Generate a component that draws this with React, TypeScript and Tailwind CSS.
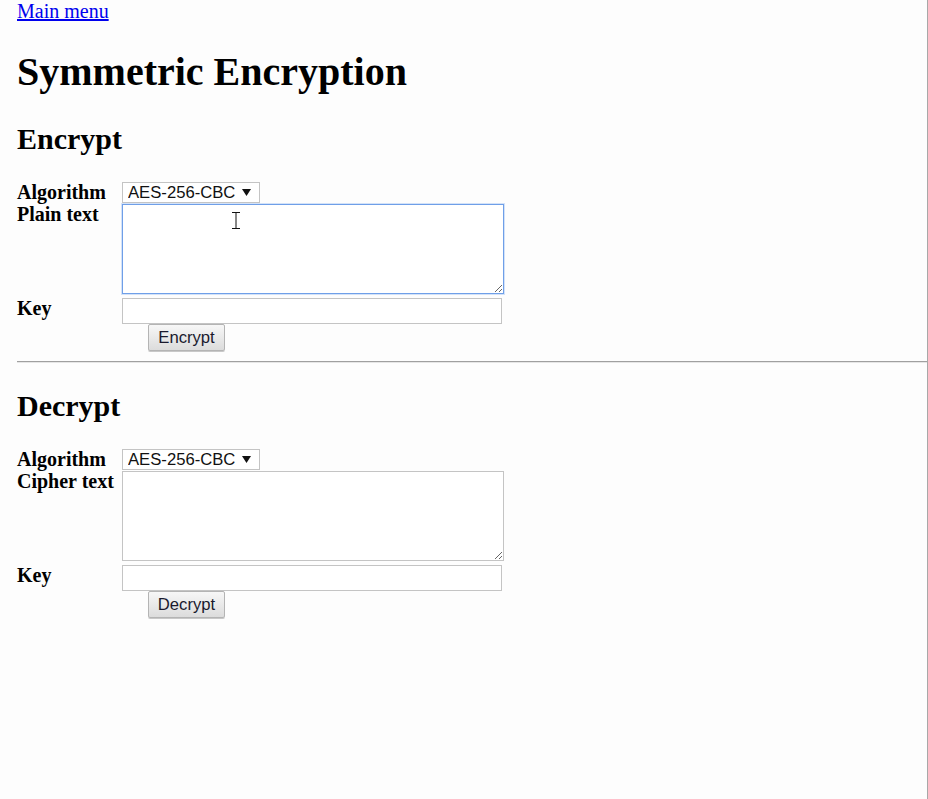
import React from "react";

const serif = "font-['Liberation_Serif','Times_New_Roman',serif]";
const sans = "font-['Liberation_Sans',Arial,sans-serif]";

function Arrow() {
  return (
    <svg width="9" height="7" viewBox="0 0 9 7" aria-hidden className="ml-[6px] mr-[8px] shrink-0">
      <polygon points="0,0 9,0 4.5,7" fill="#111" />
    </svg>
  );
}

function AlgoSelect() {
  return (
    <div className={`flex h-[21px] items-center border border-[#c4c4c4] bg-white ${sans} text-[16.67px] text-[#111]`}>
      <select className="appearance-none bg-transparent pl-[5px] leading-[19px] outline-none">
        <option>AES-256-CBC</option>
      </select>
      <Arrow />
    </div>
  );
}

type FormProps = {
  title: string;
  textLabel: string;
  action: string;
  focused?: boolean;
};

function CryptoForm({ title, textLabel, action, focused = false }: FormProps) {
  return (
    <section>
      <h2 className="text-[30px] leading-[34px] font-bold">{title}</h2>
      <div className="relative mt-[26px] grid grid-cols-[105px_auto] items-start">
        <div className="text-[20px] leading-[20px] font-bold">Algorithm</div>
        <div className="flex">
          <AlgoSelect />
        </div>

        <div className="mt-[1px] text-[20px] leading-[20px] font-bold">{textLabel}</div>
        <textarea
          className={`mt-[1px] block h-[90px] w-[382px] bg-white ${
            focused
              ? "border border-[#6f9fe8] shadow-[0_0_0_1px_#d3e2f8]"
              : "border border-[#c4c4c4]"
          } outline-none`}
        />

        <div className="mt-[4px] text-[20px] leading-[20px] font-bold">Key</div>
        <input
          type="text"
          className="mt-[4px] block h-[26px] w-[380px] border border-[#c4c4c4] bg-white outline-none"
        />

        <div />
        <div className="flex">
          <button
            className={`ml-[26px] h-[27px] w-[77px] rounded-[2px] border border-[#b4b4b4] bg-gradient-to-b from-[#f7f7f7] to-[#dcdcdc] ${sans} text-[16.67px] leading-[20px] text-[#1a1a2e] shadow-[0_1px_0_#c8c8c8]`}
          >
            {action}
          </button>
        </div>

        {focused ? (
          <svg
            width="10"
            height="17"
            viewBox="0 0 10 17"
            aria-hidden
            className="pointer-events-none absolute left-[214px] top-[30px]"
          >
            <path d="M1 0.5h8M5 0.5v16M1 16.5h8" stroke="#111" strokeWidth="1" fill="none" />
          </svg>
        ) : null}
      </div>
    </section>
  );
}

export default function App() {
  return (
    <div className={`min-h-[799px] w-[928px] border-r border-[#a8a8a8] bg-[#fdfdfd] pl-[17px] text-black ${serif}`}>
      <a href="#" className="block w-fit text-[20px] leading-[23px] text-[#0000ee] underline">
        Main menu
      </a>
      <h1 className="mt-[26px] text-[40px] leading-[46px] font-bold">Symmetric Encryption</h1>
      <div className="mt-[27px]">
        <CryptoForm title="Encrypt" textLabel="Plain text" action="Encrypt" focused />
      </div>
      <hr className="mt-[10px] border-t border-b border-t-[#a0a0a0] border-b-[#e6e6e6]" />
      <div className="mt-[26px]">
        <CryptoForm title="Decrypt" textLabel="Cipher text" action="Decrypt" />
      </div>
    </div>
  );
}
